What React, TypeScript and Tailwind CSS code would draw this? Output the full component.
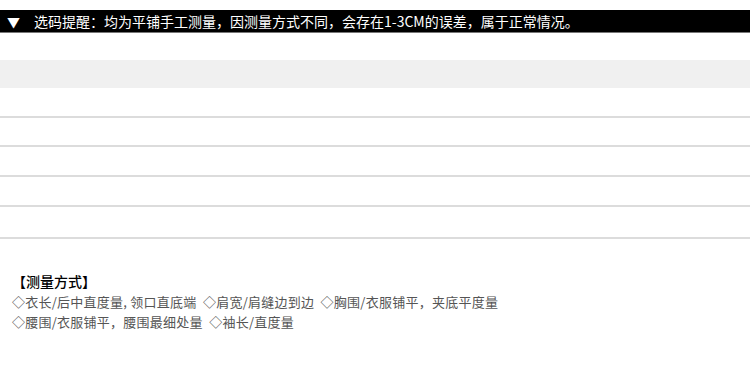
const font = { fontFamily: '"Noto Sans CJK SC", "Liberation Sans", sans-serif' };

const rows = [30, 29, 30, 30, 32];

export default function App() {
  return (
    <div className="w-[750px] h-[365px] bg-white overflow-hidden" style={font}>
      {/* tip bar */}
      <div className="mt-[10px] h-[23px] bg-black border-b border-[#777] flex items-center text-white text-[14px] leading-none">
        <span className="ml-[7px] text-[13px]">▼</span>
        <span className="ml-[14px]">选码提醒：均为平铺手工测量，因测量方式不同，会存在1-3CM的误差，属于正常情况。</span>
      </div>

      {/* size table */}
      <div className="mt-[27px]">
        <div className="h-[28px] bg-[#f0f0f0]" />
        {rows.map((h, i) => (
          <div key={i} style={{ height: h }} className="border-b-2 border-[#dcdcdc]" />
        ))}
      </div>

      {/* how to measure */}
      <div className="mt-[33px] ml-[12px]">
        <div className="text-[14px] leading-[18px] text-black font-medium">【测量方式】</div>
        <div className="mt-[2px] text-[13px] leading-[20px] tracking-[0.25px] text-[#555]">
          <div>◇衣长/后中直度量, 领口直底端&nbsp;&nbsp;◇肩宽/肩缝边到边&nbsp;&nbsp;◇胸围/衣服铺平，夹底平度量</div>
          <div>◇腰围/衣服铺平，腰围最细处量&nbsp;&nbsp;◇袖长/直度量</div>
        </div>
      </div>
    </div>
  );
}
